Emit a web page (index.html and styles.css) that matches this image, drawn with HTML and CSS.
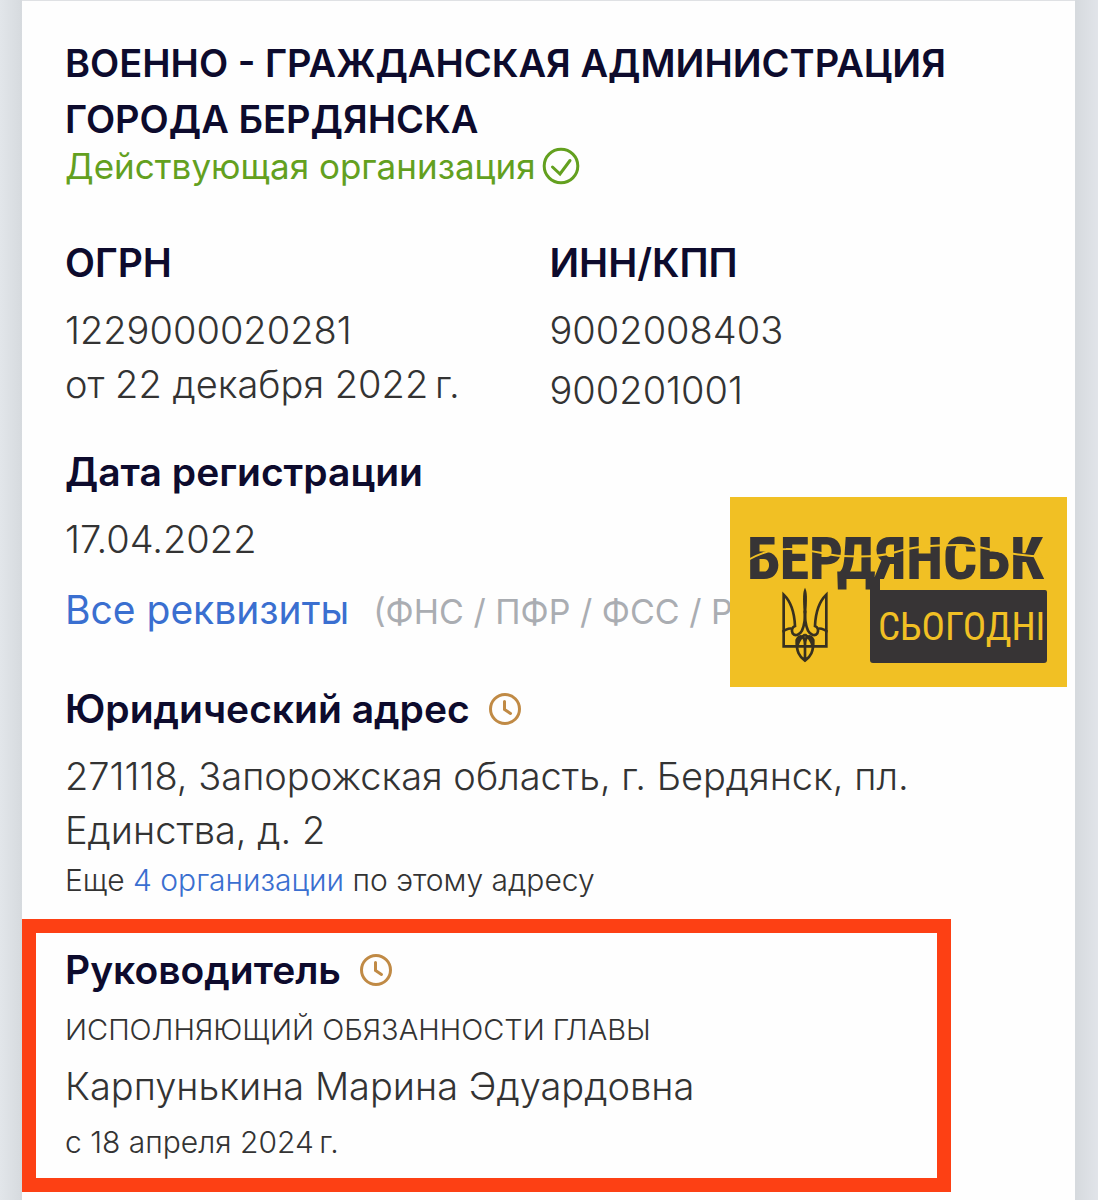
FILE: index.html
```
<!DOCTYPE html>
<html lang="ru">
<head>
<meta charset="utf-8">
<meta name="viewport" content="width=device-width, initial-scale=1">
<title>Военно-гражданская администрация города Бердянска</title>
<link rel="stylesheet" href="styles.css">
</head>
<body>
<main class="card">
  <header class="section intro">
    <h1 class="title">ВОЕННО - ГРАЖДАНСКАЯ АДМИНИСТРАЦИЯ ГОРОДА БЕРДЯНСКА</h1>
    <p class="status">Действующая организация
      <svg class="status-icon" viewBox="0 0 38 38" aria-hidden="true"><circle cx="19" cy="19" r="16.8"/><path d="M10.500 20l7.500 7 10-13.500"/></svg>
    </p>
  </header>

  <section class="section codes">
    <div>
      <h2 class="heading">ОГРН</h2>
      <p class="value">1229000020281<br>от 22 декабря 2022&#8239;г.</p>
    </div>
    <div>
      <h2 class="heading">ИНН/КПП</h2>
      <div class="stack">
        <p class="value">9002008403</p>
        <p class="value">900201001</p>
      </div>
    </div>
  </section>

  <section class="section registration">
    <h2 class="heading">Дата регистрации</h2>
    <p class="value">17.04.2022</p>
    <p class="details"><a class="link" href="#details">Все реквизиты</a> <span class="hint">(ФНС / ПФР / ФСС / Р</span></p>
  </section>

  <section class="section address">
    <h2 class="heading">Юридический адрес
      <svg class="clock" viewBox="0 0 34 34" aria-hidden="true"><circle cx="17" cy="17" r="14.500"/><path d="M16.500 9.500v8l6 4"/></svg>
    </h2>
    <p class="value">271118, Запорожская область, г. Бердянск, пл. Единства, д. 2</p>
    <p class="note">Еще <a class="link" href="#same-address">4 организации</a> по этому адресу</p>
  </section>

  <section class="head">
    <h2 class="heading">Руководитель
      <svg class="clock" viewBox="0 0 34 34" aria-hidden="true"><circle cx="17" cy="17" r="14.500"/><path d="M16.500 9.500v8l6 4"/></svg>
    </h2>
    <p class="note position">ИСПОЛНЯЮЩИЙ ОБЯЗАННОСТИ ГЛАВЫ</p>
    <p class="value">Карпунькина Марина Эдуардовна</p>
    <p class="note">с 18 апреля 2024&#8239;г.</p>
  </section>

  <svg class="logo" viewBox="0 0 337 190" role="img" aria-label="Бердянськ сьогодні">
    <rect width="337" height="190" fill="#f1c024"/>
    <text class="logo-name" x="17" y="82">БЕРДЯНСЬК</text>
    <path d="M16 64C28 57 40 52 56 52C78 51 94 58 112 59C130 60 150 60 166 55C184 49 206 48 228 48C258 48 264 58 318 60" fill="none" stroke="#f1c024" stroke-width="2"/>
    <path d="M140 80h10v13h165q2 0 2 2v68q0 3-3 3H143q-3 0-3-3z" fill="#373435"/>
    <text class="logo-today" x="148" y="143">СЬОГОДНІ</text>
    <g transform="translate(10 13) scale(.3333)" fill="none" stroke="#373020" stroke-width="8" stroke-linejoin="miter">
      <path d="M158 357C148 352 142 358 131 362V254C154 276 163 304 165 348C157 351 153 360 158 370C166 380 180 374 186 362C194 344 196 325 195 302"/>
      <path d="M232 357C242 352 248 358 259 362V254C236 276 227 304 225 348C233 351 237 360 232 370C224 380 210 374 204 362C196 344 194 325 195 302"/>
      <path d="M131 360V409H259V360"/>
      <path d="M195 452C178 440 169 425 170 390C180 370 195 378 195 405C195 378 210 370 220 390C221 425 212 440 195 452zM195 382V448M195 374C180 384 174 398 172 409M195 374C210 384 216 398 218 409"/>
      <path d="M195 233C202 246 202 262 199 310h-8C188 262 188 246 195 233z" fill="#373020" stroke="none"/>
    </g>
  </svg>
</main>
</body>
</html>
```
FILE: styles.css
```
* {
  box-sizing: border-box;
}

body {
  margin: 0;
  padding: 0 23px 0 22px;
  background: linear-gradient(90deg, #e2e6ea 0, #d6dade 22px, #d6dade calc(100% - 22px), #e1e4e9 100%);
  font-family: Inter, "Liberation Sans", sans-serif;
  font-size: 38px;
  font-weight: 300;
  line-height: 54px;
  color: #333;
}

h1,
h2,
p {
  margin: 0;
}

.card {
  position: relative;
  min-height: 100vh;
  padding: 34px 0 8px;
  border-top: 1px solid #dfe1e4;
  background: #fefefe;
}

.section {
  padding: 0 41px 0 43px;
}

.title {
  font-size: 38px;
  font-weight: 600;
  line-height: 56px;
  color: #0d0b2d;
}

.status {
  display: flex;
  align-items: center;
  gap: 6px;
  font-size: 35px;
  font-weight: 400;
  line-height: 38px;
  color: #63a01f;
}

.status-icon {
  width: 38px;
  height: 38px;
  fill: none;
  stroke: currentColor;
  stroke-width: 3;
  stroke-linecap: round;
}

.heading {
  display: flex;
  align-items: center;
  gap: 18px;
  margin-bottom: 16px;
  font-size: 39px;
  font-weight: 600;
  line-height: 48px;
  color: #0d0b2d;
}

.clock {
  width: 34px;
  height: 34px;
  fill: none;
  stroke: #c08a45;
  stroke-width: 3;
  stroke-linecap: round;
}

.codes {
  display: grid;
  grid-template-columns: 1fr 1fr;
  margin-top: 54px;
}

.stack {
  display: grid;
  gap: 6px;
}

.registration {
  margin-top: 31px;
}

.details {
  display: flex;
  align-items: baseline;
  gap: 24px;
  margin-top: 17px;
  font-size: 39px;
  font-weight: 400;
  white-space: nowrap;
}

.link {
  color: #3a6fd0;
  text-decoration: none;
}

.hint {
  font-size: 34px;
  color: #aaadb2;
}

.address {
  margin-top: 46px;
}

.note {
  font-size: 30px;
  line-height: 40px;
}

.position {
  font-size: 29px;
}

.address .note {
  margin-top: 3px;
}

.head {
  margin: 19px 124px 0 0;
  padding: 13px 29px 16px;
  border: 14px solid #fd4014;
}

.head .value {
  margin: 9px 0;
}

.logo {
  position: absolute;
  top: 496px;
  right: 8px;
  width: 337px;
  height: 190px;
}

.logo-name,
.logo-today {
  font-family: "Roboto Condensed", Roboto, sans-serif;
}

.logo-name {
  font-size: 60px;
  font-weight: 800;
  fill: #373435;
}

.logo-today {
  font-size: 39px;
  font-weight: 400;
  fill: #f1c024;
}
```
